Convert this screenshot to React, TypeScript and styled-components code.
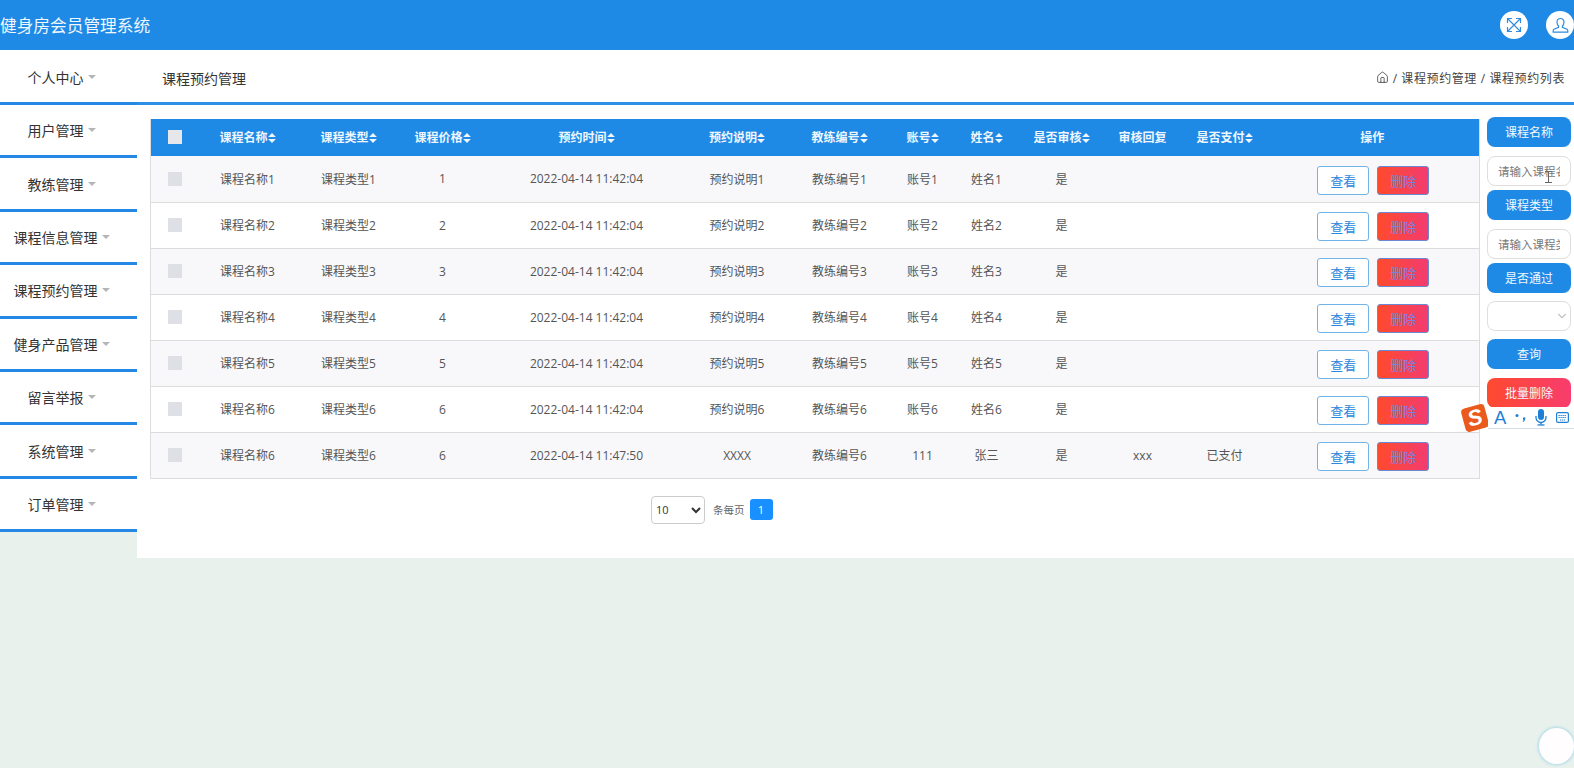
import React from "react";
import styled, { createGlobalStyle } from "styled-components";
import { Home, ChevronDown } from "lucide-react";

const Global = createGlobalStyle`
  html, body { margin: 0; padding: 0; height: 100%; overflow: hidden; background: #e8f1ec; }
  body { font-family: "Open Sans", "Noto Sans CJK SC", sans-serif; }
  * { box-sizing: border-box; }
`;

const Page = styled.div`
  position: relative;
  width: 1574px;
  height: 768px;
  overflow: hidden;
  background: #e8f1ec;
`;
const TopBar = styled.header`
  height: 50px;
  background: #1f8ae6;
  display: flex;
  align-items: center;
  justify-content: space-between;
`;
const Title = styled.h1`
  margin: 0;
  font-size: 16.7px;
  font-weight: 400;
  color: #f0f7fd;
  white-space: nowrap;
`;
const TopActions = styled.div`
  display: flex;
  gap: 18px;
`;
const RoundIcon = styled.div`
  width: 28px;
  height: 28px;
  border-radius: 50%;
  background: #fff;
  color: #2f8cdf;
  display: flex;
  align-items: center;
  justify-content: center;
`;
const Body = styled.div`
  display: flex;
  align-items: flex-start;
`;
const Sidebar = styled.nav`
  width: 137px;
  background: #fff;
  padding-top: 1.6px;
`;
const MenuItem = styled.div`
  height: 53.4px;
  border-bottom: 3px solid #2488e4;
  display: flex;
  align-items: center;
  justify-content: center;
  gap: 4px;
  padding-right: 14px;
  font-size: 14px;
  color: #333;
`;
const Caret = styled.span`
  width: 0;
  height: 0;
  border-left: 4px solid transparent;
  border-right: 4px solid transparent;
  border-top: 4px solid #b5b5b5;
`;
const Main = styled.main`
  flex: 1;
  height: 508px;
  background: #fff;
`;
const CrumbBar = styled.div`
  height: 55px;
  border-bottom: 3px solid #2f8ee6;
  display: flex;
  align-items: center;
  justify-content: space-between;
  padding: 3px 9px 0 25px;
`;
const PageName = styled.div`
  font-size: 14px;
  color: #333;
`;
const Crumbs = styled.div`
  display: flex;
  align-items: center;
  gap: 4px;
  font-size: 12px;
  letter-spacing: 0.6px;
  color: #444;
`;
const Content = styled.div`
  display: flex;
  align-items: flex-start;
  padding: 12px 3px 0 13px;
  gap: 8px;
`;
const TableColumn = styled.div`
  width: 1329px;
  margin-top: 1.5px;
`;
const Table = styled.table`
  width: 1329px;
  table-layout: fixed;
  border-collapse: collapse;
  border-left: 1px solid #dcdcdc;
  border-right: 1px solid #dcdcdc;
`;
const Col = styled.col<{ $w: number }>`
  width: ${(p) => p.$w}px;
`;
const HeadRow = styled.tr`
  height: 37.5px;
  background: #1f8ae6;
`;
const Th = styled.th`
  padding: 0;
  font-size: 12px;
  font-weight: 700;
  color: #eef6fd;
  text-align: center;
  white-space: nowrap;
  &:last-child { padding-right: 4px; }
`;
const Row = styled.tr<{ $odd: boolean }>`
  height: 46px;
  background: ${(p) => (p.$odd ? "#f8f8fb" : "#fff")};
  border-bottom: 1px solid #dcdcdc;
`;
const Td = styled.td`
  padding: 0;
  font-size: 12px;
  color: #555;
  text-align: center;
  white-space: nowrap;
`;
const CheckCell = styled.td`
  padding: 0 0 0 17px;
`;
const CheckHead = styled.th`
  padding: 0 0 0 17px;
`;
const Check = styled.div<{ $head?: boolean }>`
  width: 14px;
  height: 14px;
  background: ${(p) => (p.$head ? "#e6e7eb" : "#dfe0e6")};
`;
const OpsCell = styled.div`
  display: flex;
  justify-content: center;
  gap: 8px;
  padding: 3px 2px 0 0;
`;
const ViewBtn = styled.button`
  width: 52px;
  height: 29px;
  padding: 0;
  background: #fff;
  border: 1.5px solid #72b4e8;
  border-radius: 3px;
  color: #2a88dd;
  font: 13px "Noto Sans CJK SC", sans-serif;
`;
const DelBtn = styled.button`
  width: 52px;
  height: 29px;
  padding: 0;
  background: linear-gradient(90deg, #ff4a2e, #f23c70);
  border: 1.5px solid #6c88cf;
  border-radius: 3px;
  color: #7b80e2;
  font: 13px "Noto Sans CJK SC", sans-serif;
`;
const Pager = styled.div`
  display: flex;
  align-items: center;
  padding: 17px 0 0 501px;
`;
const PageSize = styled.select`
  width: 54px;
  height: 28px;
  font: 11px "Open Sans", sans-serif;
  color: #333;
  background: #fff;
  border: 1px solid #ccc;
  border-radius: 4px;
`;
const PagerText = styled.span`
  margin-left: 8px;
  font-size: 10.5px;
  color: #666;
`;
const PageNum = styled.div`
  width: 23px;
  height: 21px;
  margin-left: 5px;
  background: #1890ff;
  border-radius: 3px;
  color: #fff;
  font-size: 11px;
  display: flex;
  align-items: center;
  justify-content: center;
`;
const Filters = styled.aside`
  position: relative;
  width: 84px;
  display: flex;
  flex-direction: column;
`;
const FilterBtn = styled.div<{ $danger?: boolean; $mt: number }>`
  height: 30px;
  margin-top: ${(p) => p.$mt}px;
  border-radius: 8px;
  background: ${(p) => (p.$danger ? "linear-gradient(90deg, #ff4a2e, #f83c6e)" : "#1f8ae6")};
  color: #f2f8fe;
  font-size: 12px;
  display: flex;
  align-items: center;
  justify-content: center;
`;
const FilterInput = styled.input<{ $mt: number }>`
  width: 84px;
  height: 30px;
  margin-top: ${(p) => p.$mt}px;
  padding: 0 10px;
  border: 1px solid #dedede;
  border-radius: 8px;
  font: 11.5px "Noto Sans CJK SC", sans-serif;
  background: #fff;
  &::placeholder { color: #777; }
`;
const FilterSelect = styled.div`
  position: relative;
  height: 30px;
  margin-top: 8px;
  border: 1px solid #dedede;
  border-radius: 8px;
  color: #c4c4c4;
`;
const SelectArrow = styled.span`
  position: absolute;
  right: 1px;
  top: 7px;
  display: flex;
`;
const IBeam = styled.div`
  position: absolute;
  left: 58px;
  top: 54px;
  width: 7px;
  height: 12px;
  border-top: 1px solid #666;
  border-bottom: 1px solid #666;
  &::after {
    content: "";
    position: absolute;
    left: 3px;
    top: 0;
    bottom: 0;
    width: 1px;
    background: #666;
  }
`;
const ImeBar = styled.div`
  position: absolute;
  left: 1488px;
  top: 407px;
  width: 86px;
  height: 22px;
  background: #fff;
  border-bottom: 1px solid #d6dde6;
  display: flex;
  align-items: center;
  gap: 9px;
  padding-left: 6px;
  color: #1f7fd6;
`;
const ImeLogo = styled.div`
  position: absolute;
  left: 1463px;
  top: 406px;
  width: 24px;
  height: 24px;
  border-radius: 4px;
  background: #ea5a1c;
  transform: rotate(-15deg);
  color: #fff;
  font: italic 700 22px/24px "Liberation Sans", sans-serif;
  text-align: center;
`;
const ImeLetter = styled.span`
  font: 18.5px "Liberation Sans", sans-serif;
`;
const FloatBall = styled.div`
  position: absolute;
  left: 1539px;
  top: 728px;
  width: 35px;
  height: 36px;
  border-radius: 50%;
  background: #fffdfd;
  box-shadow: 0 0 3px 1px #a9d8e8;
`;

const menu = ["个人中心","用户管理","教练管理","课程信息管理","课程预约管理","健身产品管理","留言举报","系统管理","订单管理"];
const widths = [44,106,96,92,196,105,100,66,62,88,74,90,210];
const heads: [string, boolean][] = [["课程名称",true],["课程类型",true],["课程价格",true],["预约时间",true],["预约说明",true],["教练编号",true],["账号",true],["姓名",true],["是否审核",true],["审核回复",false],["是否支付",true],["操作",false]];

const row = (n: number) => [`课程名称${n}`,`课程类型${n}`,`${n}`,"2022-04-14 11:42:04",`预约说明${n}`,`教练编号${n}`,`账号${n}`,`姓名${n}`,"是","",""];
const rows: string[][] = [1,2,3,4,5,6].map(row).concat([["课程名称6","课程类型6","6","2022-04-14 11:47:50","XXXX","教练编号6","111","张三","是","xxx","已支付"]]);

const Sort = () => (
  <svg width="8" height="10" viewBox="0 0 7 9" fill="#eef6fd" style={{ verticalAlign: "-1px" }}>
    <path d="M3.5 0 7 3.6H0zM0 5.4h7L3.5 9z" />
  </svg>
);
const ExpandGlyph = () => (
  <svg width="16" height="16" viewBox="0 0 16 16" fill="none" stroke="currentColor" strokeWidth="1.2">
    <path d="M2 2l12 12M14 2 2 14" />
    <path d="M1.5 6V1.5H6M10 1.5h4.5V6M14.5 10v4.5H10M6 14.5H1.5V10" />
  </svg>
);
const UserGlyph = () => (
  <svg width="17" height="17" viewBox="0 0 17 17" fill="none" stroke="currentColor" strokeWidth="1.2">
    <path d="M8.5 1.5c-2.2 0-3.5 1.7-3.5 3.7 0 1.6.7 3 1.6 3.8v1.3L2 12.3c-.6.3-.8.8-.8 1.4v1.5h14.6v-1.5c0-.6-.2-1.1-.8-1.4l-4.6-2V9c.9-.8 1.6-2.2 1.6-3.8 0-2-1.3-3.7-3.5-3.7z" />
  </svg>
);
const Mic = () => (
  <svg width="12" height="17" viewBox="0 0 12 17" fill="currentColor">
    <rect x="3" y="0" width="6" height="11" rx="3" />
    <path d="M1 7v1.5a5 5 0 0 0 10 0V7" fill="none" stroke="currentColor" strokeWidth="1.3" />
    <rect x="5.3" y="13" width="1.4" height="2.5" />
    <rect x="2.5" y="15.3" width="7" height="1.3" />
  </svg>
);
const Keys = () => (
  <svg width="13" height="11" viewBox="0 0 13 11" fill="none" stroke="currentColor">
    <rect x=".6" y=".6" width="11.8" height="9.8" rx="1.5" strokeWidth="1.2" />
    <path d="M2.5 3.5h8M2.5 5.5h8M4 8h5" strokeWidth="1.2" strokeDasharray="1.3 .7" />
  </svg>
);
const Punct = () => (
  <svg width="11" height="10" viewBox="0 0 11 10" fill="currentColor">
    <circle cx="2" cy="2.5" r="1.5" />
    <path d="M8 4.5h2.4c0 2-.7 3.6-2.2 4.5l-.6-.6c.6-.5 1-1 1-1.7H8z" />
  </svg>
);

export default function App() {
  return (
    <Page>
      <Global />
      <TopBar>
        <Title>健身房会员管理系统</Title>
        <TopActions>
          <RoundIcon><ExpandGlyph /></RoundIcon>
          <RoundIcon><UserGlyph /></RoundIcon>
        </TopActions>
      </TopBar>
      <Body>
        <Sidebar>
          {menu.map((m) => (
            <MenuItem key={m}>{m}<Caret /></MenuItem>
          ))}
        </Sidebar>
        <Main>
          <CrumbBar>
            <PageName>课程预约管理</PageName>
            <Crumbs>
              <Home size={13} strokeWidth={1.4} color="#333" />
              <span>/ 课程预约管理 / 课程预约列表</span>
            </Crumbs>
          </CrumbBar>
          <Content>
            <TableColumn>
              <Table>
                <colgroup>
                  {widths.map((w, i) => <Col key={i} $w={w} />)}
                </colgroup>
                <thead>
                  <HeadRow>
                    <CheckHead><Check $head /></CheckHead>
                    {heads.map(([h, s], i) => (
                      <Th key={i}>{h}{s && <Sort />}</Th>
                    ))}
                  </HeadRow>
                </thead>
                <tbody>
                  {rows.map((r, i) => (
                    <Row key={i} $odd={i % 2 === 0}>
                      <CheckCell><Check /></CheckCell>
                      {r.map((c, j) => <Td key={j}>{c}</Td>)}
                      <Td>
                        <OpsCell>
                          <ViewBtn>查看</ViewBtn>
                          <DelBtn>删除</DelBtn>
                        </OpsCell>
                      </Td>
                    </Row>
                  ))}
                </tbody>
              </Table>
              <Pager>
                <PageSize defaultValue="10">
                  <option>10</option>
                  <option>20</option>
                  <option>50</option>
                </PageSize>
                <PagerText>条每页</PagerText>
                <PageNum>1</PageNum>
              </Pager>
            </TableColumn>
            <Filters>
              <FilterBtn $mt={0}>课程名称</FilterBtn>
              <FilterInput $mt={9} placeholder="请输入课程名称" />
              <FilterBtn $mt={4}>课程类型</FilterBtn>
              <FilterInput $mt={9} placeholder="请输入课程类型" />
              <FilterBtn $mt={4}>是否通过</FilterBtn>
              <FilterSelect><SelectArrow><ChevronDown size={14} /></SelectArrow></FilterSelect>
              <FilterBtn $mt={8}>查询</FilterBtn>
              <FilterBtn $mt={9} $danger>批量删除</FilterBtn>
              <IBeam />
            </Filters>
          </Content>
        </Main>
      </Body>
      <ImeLogo>S</ImeLogo>
      <ImeBar>
        <ImeLetter>A</ImeLetter>
        <Punct />
        <Mic />
        <Keys />
      </ImeBar>
      <FloatBall />
    </Page>
  );
}
